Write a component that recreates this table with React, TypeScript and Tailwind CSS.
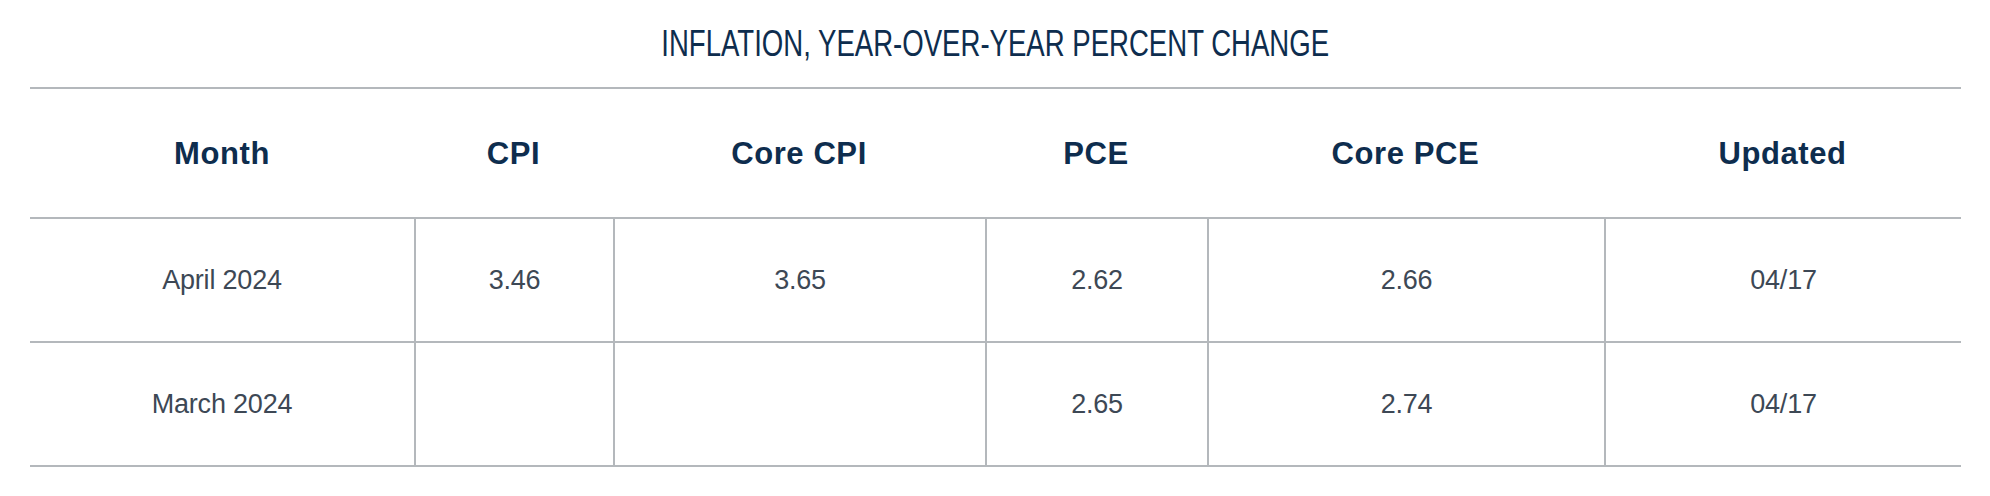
import React from 'react';

type Row = {
    month: string;
    cpi: string;
    coreCpi: string;
    pce: string;
    corePce: string;
    updated: string;
};

const rows: Row[] = [
    { month: 'April 2024', cpi: '3.46', coreCpi: '3.65', pce: '2.62', corePce: '2.66', updated: '04/17' },
    { month: 'March 2024', cpi: '', coreCpi: '', pce: '2.65', corePce: '2.74', updated: '04/17' },
];

const headers = ['Month', 'CPI', 'Core CPI', 'PCE', 'Core PCE', 'Updated'];

const gridCols = 'grid grid-cols-[384px_199px_372px_222px_397px_357px]';

const App: React.FC = () => {
    return (
        <div className="w-[1990px] h-[496px] bg-white font-['Liberation_Sans',Arial,sans-serif]">
            <div className="h-[87px] flex items-center justify-center pb-[1px]">
                {/* condensed title: no narrow face installed, so squeeze the regular one */}
                <h1 className="inline-block scale-x-[0.745] text-[37px] leading-none text-[#0e2d4e] whitespace-nowrap">
                    INFLATION, YEAR-OVER-YEAR PERCENT CHANGE
                </h1>
            </div>

            <div className="ml-[30px] w-[1931px]">
                {/* header row */}
                <div className={`${gridCols} h-[132px] border-t-2 border-b-2 border-[#b4b8bc]`}>
                    {headers.map(h => (
                        <div key={h} className="flex items-center justify-center pt-[2px] text-[31px] font-bold tracking-[0.6px] text-[#0e2d4e]">
                            {h}
                        </div>
                    ))}
                </div>

                {/* body rows */}
                {rows.map(r => (
                    <div key={r.month} className={`${gridCols} h-[124px] border-b-2 border-[#b4b8bc]`}>
                        {[r.month, r.cpi, r.coreCpi, r.pce, r.corePce, r.updated].map((v, i) => (
                            <div
                                key={i}
                                className={`flex items-center justify-center text-[27px] tracking-[-0.2px] text-[#3d4855] ${i > 0 ? 'border-l-2 border-[#b4b8bc]' : ''}`}
                            >
                                {v}
                            </div>
                        ))}
                    </div>
                ))}
            </div>
        </div>
    );
};

export default App;
